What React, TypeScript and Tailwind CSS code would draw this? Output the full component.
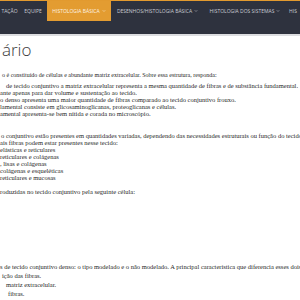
import { ChevronDown } from "lucide-react"

interface NavItem {
  label: string
  width: string
  active?: boolean
  dropdown?: boolean
}

const navItems: NavItem[] = [
  { label: "TAÇÃO", width: "w-[19px]" },
  { label: "EQUIPE", width: "w-[28px]" },
  { label: "HISTOLOGIA BÁSICA", width: "w-[64px]", active: true, dropdown: true },
  { label: "DESENHOS/HISTOLOGIA BÁSICA", width: "w-[93px]", dropdown: true },
  { label: "HISTOLOGIA DOS SISTEMAS", width: "w-[82px]", dropdown: true },
  { label: "HIS", width: "w-[14px]" },
]

function Line({ text, pl = "" }: { text: string; pl?: string }) {
  return <p className={`h-[7px] whitespace-nowrap leading-[7px] ${pl}`}>{text}</p>
}

function App() {
  return (
    <div className="relative h-[300px] w-[300px] overflow-hidden bg-white">
      <header className="h-[36px] border-t border-[#e29a2f] border-b-2 border-b-[#dcdde0] bg-[#2e323e]">
        <nav className="flex h-[20px] font-['Open_Sans',sans-serif] text-[5px] leading-none">
          {navItems.map((item) => (
            <div
              key={item.label}
              className={`flex shrink-0 items-center justify-center gap-[2px] overflow-hidden whitespace-nowrap px-[4px] ${item.width} ${
                item.active ? "bg-[#e39c31] text-[#fdf3e3]" : "text-[#c9ccd3]"
              }`}
            >
              <span>{item.label}</span>
              {item.dropdown && <ChevronDown className="h-[4px] w-[4px] shrink-0" strokeWidth={3} />}
            </div>
          ))}
        </nav>
      </header>

      <main className="font-['Liberation_Serif',serif] text-[6.5px] text-[#1f1f1f]">
        <h1 className="mt-[3px] h-[22px] pl-[2px] font-['Open_Sans',sans-serif] text-[17px] font-light leading-[22px] text-[#3a3a3a]">
          ário
        </h1>

        <div className="mt-[11px]">
          <Line pl="pl-[2px] text-[6px]" text="o é constituído de células e abundante matriz extracelular. Sobre essa estrutura, responda:" />
          <div className="mt-[3px]">
            <Line pl="pl-[6px]" text="de tecido conjuntivo a matriz extracelular representa a mesma quantidade de fibras e de substância fundamental." />
            <Line text="ante apenas para dar volume e sustentação ao tecido." />
            <Line text="o denso apresenta uma maior quantidade de fibras comparado ao tecido conjuntivo frouxo." />
            <Line text="lamental consiste em glicosaminoglicanas, proteoglicanas e células." />
            <Line text="amental apresenta-se bem nítida e corada no microscópio." />
          </div>
        </div>

        <div className="mt-[15px]">
          <Line pl="pl-[1px]" text="o conjuntivo estão presentes em quantidades variadas, dependendo das necessidades estruturais ou função do tecido." />
          <Line text="ais fibras podem estar presentes nesse tecido:" />
          <Line text="elásticas e reticulares" />
          <Line text="reticulares e colágenas" />
          <Line text=", lisas e colágenas" />
          <Line text="colágenas e esqueléticas" />
          <Line text="reticulares e mucosas" />
        </div>

        <div className="mt-[7px]">
          <Line text="roduzidas no tecido conjuntivo pela seguinte célula:" />
        </div>

        <div className="mt-[68px] flex flex-col gap-[2px]">
          <Line text="s de tecido conjuntivo denso: o tipo modelado e o não modelado. A principal característica que diferencia esses dois tipos é:" />
          <Line pl="pl-[2px]" text="ição das fibras." />
          <Line pl="pl-[6px]" text="matriz extracelular." />
          <Line pl="pl-[8px]" text="fibras." />
        </div>
      </main>
    </div>
  )
}

export default App
